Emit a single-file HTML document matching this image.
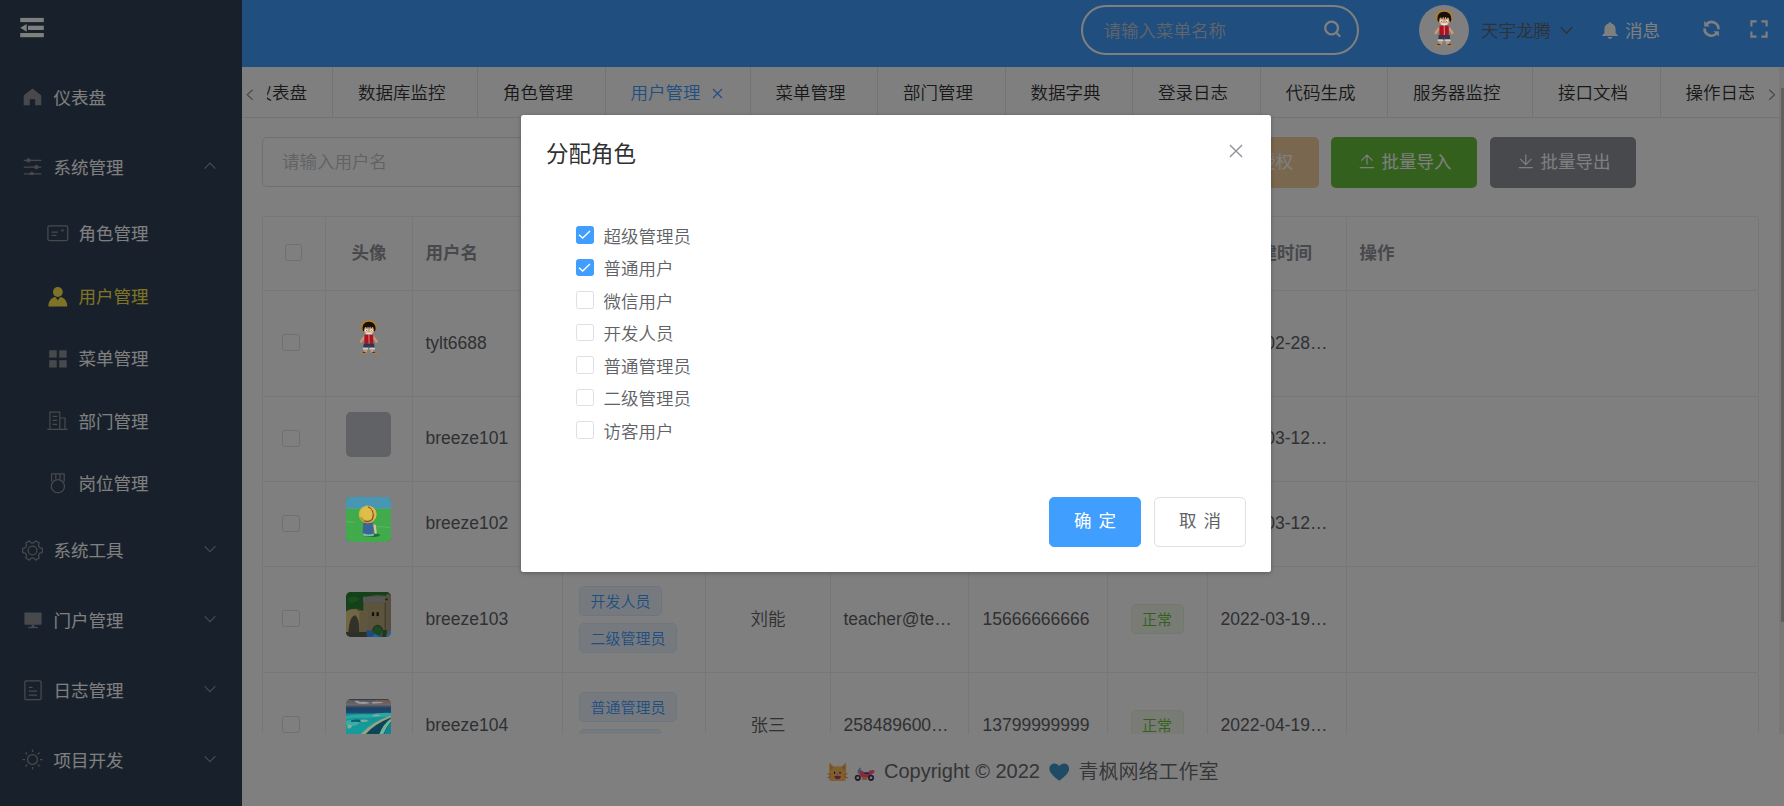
<!DOCTYPE html>
<html lang="zh-CN">
<head>
<meta charset="utf-8">
<title>用户管理</title>
<style>
*{box-sizing:border-box;margin:0;padding:0}
html,body{width:1784px;height:806px;overflow:hidden;background:#fff}
body{position:relative;font-family:"Liberation Sans","Noto Sans CJK SC",sans-serif;font-size:17.5px;font-weight:350;color:#606266}
svg{display:block}
/* ---------- sidebar ---------- */
#sidebar{position:absolute;left:0;top:0;width:242px;height:806px;background:#304156;color:#fff;font-weight:400}
#sidebar .mi{position:absolute;left:0;width:242px;height:70px;line-height:70px;white-space:nowrap}
#sidebar .mi.sub{height:62.5px;line-height:62.5px}
#sidebar .mi svg{position:absolute}
#sidebar .mi span{position:absolute;left:53.5px;top:1px}
#sidebar .mi.sub span{left:78.5px}
#sidebar .mi.act{color:#ffe74c}
/* ---------- header ---------- */
#header{position:absolute;left:242px;top:0;width:1542px;height:67px;background:#409eff}
#hsearch{position:absolute;left:839px;top:5px;width:278px;height:50px;border:2px solid #fff;border-radius:25px;color:#c3cad4;line-height:48px;padding-left:20.5px}
#havatar{position:absolute;left:1177px;top:5px;width:50px;height:50px;border-radius:50%;background:#fff;overflow:hidden}
#hname{position:absolute;left:1239px;top:0;line-height:62px;color:#606266}
#hmsg{position:absolute;left:1383px;top:0;line-height:62px;color:#fff;font-weight:400}
/* ---------- tabs ---------- */
#tabs{position:absolute;left:242px;top:67px;width:1537px;height:50.5px;border-bottom:1px solid #e4e7ed;background:#fff}
#tabscroll{position:absolute;left:25px;top:0;width:1487px;height:50px;overflow:hidden}
#tabnav{position:absolute;left:-37.5px;top:0;height:50px;white-space:nowrap;display:flex}
.tab{height:50px;line-height:52px;padding:0 31.5px 0 25px;border-left:1px solid #e4e7ed;position:relative;color:#303133;font-size:17.5px;flex:none}
.tab:first-child{border-left:none;padding-right:25px}
.tab.act{color:#409eff;padding-right:49px}
.tab.act svg{position:absolute;left:106.5px;top:21px}
/* ---------- main ---------- */
#main{position:absolute;left:242px;top:117.5px;width:1537px;height:616px;overflow:hidden;background:#fff}
#uinput{position:absolute;left:20px;top:19.5px;width:300px;height:50px;border:1px solid #dcdfe6;border-radius:5px;line-height:48px;padding-left:19px;color:#c0c4cc}
.btn{position:absolute;font-weight:400;top:19.5px;width:146px;height:50.5px;border-radius:5px;color:#fff;line-height:50px;white-space:nowrap}
.btn svg{position:absolute;top:17px}
.btn span{position:absolute}
/* table */
#tbl{position:absolute;left:20px;top:98.5px;width:1496px;border-top:1px solid #ebeef5;border-left:1px solid #ebeef5}
.tr{display:flex;border-bottom:1px solid #ebeef5}
.tr>div{flex:none;border-right:1px solid #ebeef5;position:relative;white-space:nowrap;overflow:hidden}
.th{height:74px;line-height:73px;font-weight:bold;color:#909399}
.c0{width:63px}.c1{width:87px}.c2{width:150px}.c3{width:143px}.c4{width:125px}.c5{width:138px}.c6{width:139px}.c7{width:100px}.c8{width:139px}.c9{width:412px}
.ctr{text-align:center}
.r .c6{padding-right:4px}
.pl{padding-left:12.5px}
.cb{position:absolute;width:17.5px;height:17px;border:1px solid #dcdfe6;border-radius:2.5px;background:#fff}
.av{position:absolute;left:19.5px;width:45px;height:45px;border-radius:5px;overflow:hidden;background:#c0c4cc}
.tag{display:block;height:30px;line-height:30px;padding:0 10.5px;font-size:15px;color:#409eff;background:#ecf5ff;border:1.25px solid #d9ecff;border-radius:5px;position:absolute;left:16px}
.tag.ok{color:#67c23a;background:#f0f9eb;border-color:#e1f3d8}
/* ---------- footer ---------- */
#footer{position:absolute;left:242px;top:733.5px;width:1542px;height:72.5px;background:#fff;font-size:20px;color:#686a6e}
/* ---------- overlay + dialog ---------- */
#mask{position:absolute;left:0;top:0;width:1784px;height:806px;background:rgba(0,0,0,.5)}
#dlg{position:absolute;left:521px;top:114.5px;width:750px;height:457.5px;background:#fff;border-radius:2.5px;box-shadow:0 1px 4px rgba(0,0,0,.3)}
#dlg h3{position:absolute;left:25px;top:25px;font-size:22.5px;line-height:30px;font-weight:normal;color:#303133}
#dlg .x{position:absolute;left:707px;top:28px}
.ck{position:absolute;left:55px;height:32.5px;line-height:32.5px;white-space:nowrap;color:#606266}
.ck i{position:absolute;left:0;top:7px;width:18px;height:17.5px;border:1px solid #dcdfe6;border-radius:2.5px;background:#fff}
.ck i.on{background:#409eff;border-color:#409eff}
.ck span{position:absolute;left:27.5px;top:1.5px}
.dbtn{position:absolute;top:382.5px;width:92px;height:50px;border-radius:5px;line-height:46px;font-weight:400;text-align:center;word-spacing:2px}
</style>
</head>
<body>
<div id="sidebar">
  <svg style="position:absolute;left:20px;top:17px" width="25" height="22" viewBox="20 17 25 22" fill="#fff"><rect x="20.25" y="17.9" width="23.55" height="4.2"/><rect x="28" y="25.7" width="15.8" height="4.3"/><path d="M20.25 27.8 L26.7 24 L26.7 31.8 Z"/><rect x="20.25" y="33" width="23.55" height="4.2"/></svg>
  <div class="mi" style="top:62px">
    <svg style="left:23px;top:26px" width="19" height="18" viewBox="0 0 19 18" fill="#909399"><path d="M9.5 .6 L18.3 7.6 V17.2 H12.2 V11.3 H6.8 V17.2 H.7 V7.6 Z"/></svg>
    <span>仪表盘</span>
  </div>
  <div class="mi" style="top:132px">
    <svg style="left:23px;top:25px" width="19" height="18" viewBox="0 0 19 18" fill="none" stroke="#909399" stroke-width="1.3"><path d="M.8 3.4 H18.3 M.8 10.2 H18.3 M.8 16.9 H18.3"/><circle cx="5.500" cy="3.400" r="2.100" fill="#909399" stroke="none"/><circle cx="13.400" cy="10.200" r="2.100" fill="#909399" stroke="none"/><circle cx="8.700" cy="16.900" r="2.100" fill="#909399" stroke="none"/></svg>
    <span>系统管理</span>
    <svg style="left:203.5px;top:30px" width="12" height="8" viewBox="0 0 12 8" fill="none" stroke="#909399" stroke-width="1.2"><path d="M.6 6.6 L6 1.2 L11.4 6.6"/></svg>
  </div>
  <div class="mi sub" style="top:202px">
    <svg style="left:46.5px;top:23px" width="22" height="17" viewBox="0 0 22 17" fill="none" stroke="#909399" stroke-width="1.25"><rect x=".9" y=".9" width="19.8" height="14.7" rx="1.5"/><path d="M4.6 7 H11 M4.6 10.3 H9.4"/><circle cx="15.4" cy="5.4" r="1.2" fill="#909399" stroke="none"/></svg>
    <span>角色管理</span>
  </div>
  <div class="mi sub act" style="top:264.5px">
    <svg style="left:47.5px;top:22px" width="20" height="20" viewBox="0 0 20 20" fill="#ffe74c"><circle cx="9.85" cy="5" r="4.9"/><path d="M.4 19.4 C.4 14.4 3.4 10.6 7.4 10.1 L9.85 13.2 L12.3 10.1 C16.3 10.6 19.3 14.4 19.3 19.4 Z"/></svg>
    <span>用户管理</span>
  </div>
  <div class="mi sub" style="top:327px">
    <svg style="left:48.5px;top:22.5px" width="18" height="18" viewBox="0 0 18 18" fill="#909399"><rect x=".2" y=".3" width="7.5" height="7.3"/><rect x="10.2" y=".3" width="7.5" height="7.3"/><rect x=".2" y="10.2" width="7.5" height="7.3"/><rect x="10.2" y="10.2" width="7.5" height="7.3"/></svg>
    <span>菜单管理</span>
  </div>
  <div class="mi sub" style="top:389.5px">
    <svg style="left:47px;top:21.5px" width="21" height="20" viewBox="0 0 21 20" fill="none" stroke="#909399" stroke-width="1.2"><path d="M.3 18.4 H20.7 M2.9 18.4 V1.1 H12.8 V18.4 M12.8 7 H18 V18.4 M5.6 5.4 H10.2 M5.6 9.4 H10.2 M5.6 13.4 H10.2"/></svg>
    <span>部门管理</span>
  </div>
  <div class="mi sub" style="top:452px">
    <svg style="left:49.5px;top:21px" width="16" height="21" viewBox="0 0 16 21" fill="none" stroke="#909399" stroke-width="1.25"><circle cx="7.9" cy="13.2" r="6.6"/><path d="M1.6 8.6 V.8 H14.2 V8.6 M5.8 .8 V6.4 M10 .8 V6.4"/></svg>
    <span>岗位管理</span>
  </div>
  <div class="mi" style="top:514.5px">
    <svg style="left:22px;top:25.300px" width="21" height="21" viewBox="0 0 21 21" fill="none" stroke="#909399" stroke-width="1.250"><circle cx="10.500" cy="10.500" r="4.400"/><path d="M17.74 7.87 L20.38 8.40 L20.38 12.60 L17.74 13.13 A7.7 7.7 0 0 1 16.40 15.45 L17.26 18.01 L13.62 20.11 L11.84 18.08 A7.7 7.7 0 0 1 9.16 18.08 L7.38 20.11 L3.74 18.01 L4.60 15.45 A7.7 7.7 0 0 1 3.26 13.13 L0.62 12.60 L0.62 8.40 L3.26 7.87 A7.7 7.7 0 0 1 4.60 5.55 L3.74 2.99 L7.38 0.89 L9.16 2.92 A7.7 7.7 0 0 1 11.84 2.92 L13.62 0.89 L17.26 2.99 L16.40 5.55 A7.7 7.7 0 0 1 17.74 7.87 Z" stroke-linejoin="round"/></svg>
    <span>系统工具</span>
    <svg style="left:203.5px;top:30px" width="12" height="8" viewBox="0 0 12 8" fill="none" stroke="#909399" stroke-width="1.2"><path d="M.6 1.2 L6 6.6 L11.4 1.2"/></svg>
  </div>
  <div class="mi" style="top:584.5px">
    <svg style="left:23.5px;top:27.5px" width="18" height="17" viewBox="0 0 18 17" fill="#909399"><rect x=".4" y=".5" width="17.2" height="12.3" rx=".8"/><rect x="7.6" y="12.8" width="2.8" height="2.2"/><rect x="4.2" y="14.8" width="9.6" height="1.4"/></svg>
    <span>门户管理</span>
    <svg style="left:203.5px;top:30px" width="12" height="8" viewBox="0 0 12 8" fill="none" stroke="#909399" stroke-width="1.2"><path d="M.6 1.2 L6 6.6 L11.4 1.2"/></svg>
  </div>
  <div class="mi" style="top:654.5px">
    <svg style="left:23.5px;top:25.5px" width="18" height="21" viewBox="0 0 18 21" fill="none" stroke="#909399" stroke-width="1.25"><rect x=".9" y=".9" width="16.2" height="18.8" rx="1.2"/><path d="M4.8 7.4 H8.6 M4.8 11.2 H13 M4.8 15 H13"/></svg>
    <span>日志管理</span>
    <svg style="left:203.5px;top:30px" width="12" height="8" viewBox="0 0 12 8" fill="none" stroke="#909399" stroke-width="1.2"><path d="M.6 1.2 L6 6.6 L11.4 1.2"/></svg>
  </div>
  <div class="mi" style="top:724.5px">
    <svg style="left:22px;top:24.5px" width="21" height="21" viewBox="0 0 21 21" fill="none" stroke="#909399" stroke-width="1.25"><circle cx="10.5" cy="10.5" r="4.9"/><path d="M10.5 .6 V3 M10.5 18 V20.4 M.6 10.5 H3 M18 10.5 H20.4 M3.5 3.5 L5.2 5.2 M15.8 15.8 L17.5 17.5 M3.5 17.5 L5.2 15.8 M15.8 5.2 L17.5 3.5"/></svg>
    <span>项目开发</span>
    <svg style="left:203.5px;top:30px" width="12" height="8" viewBox="0 0 12 8" fill="none" stroke="#909399" stroke-width="1.2"><path d="M.6 1.2 L6 6.6 L11.4 1.2"/></svg>
  </div>
</div>
<div id="header">
  <div id="hsearch">请输入菜单名称</div>
  <svg style="position:absolute;left:1081px;top:20px" width="19" height="18" viewBox="0 0 19 18" fill="none" stroke="#fff" stroke-width="2.3" stroke-linecap="round"><circle cx="8.6" cy="8" r="6.4"/><path d="M13.4 12.8 L16.6 16"/></svg>
  <div id="havatar"></div>
  <div id="hname">天宇龙腾</div>
  <svg style="position:absolute;left:1318px;top:26px" width="13" height="9" viewBox="0 0 13 9" fill="none" stroke="#606266" stroke-width="1.3"><path d="M.7 1.3 L6.5 7.2 L12.3 1.3"/></svg>
  <svg style="position:absolute;left:1360px;top:21.5px" width="16" height="17" viewBox="0 0 16 17" fill="#fff"><path d="M8 .2 C8.8 .2 9.4 .8 9.4 1.6 C12 2.3 13.6 4.6 13.6 7.4 V11 L15.8 13.2 V14 H.2 V13.2 L2.4 11 V7.4 C2.4 4.6 4 2.3 6.6 1.6 C6.6 .8 7.2 .2 8 .2 Z M5.8 15 H10.2 C10.2 16.1 9.2 16.9 8 16.9 C6.800 16.9 5.8 16.1 5.8 15 Z"/></svg>
  <div id="hmsg">消息</div>
  <svg style="position:absolute;left:1460px;top:19.5px" width="19" height="18" viewBox="0 0 19 18" fill="none" stroke="#fff" stroke-width="2.600"><path d="M4.200 4.600 A6.900 6.900 0 0 1 16.500 9.200"/><path d="M14.900 13 A6.900 6.900 0 0 1 2.600 8.400"/><path d="M2.200 1 V6.400 H7.800 Z" fill="#fff" stroke="none"/><path d="M16.900 16.600 V11.200 H11.300 Z" fill="#fff" stroke="none"/></svg>
  <svg style="position:absolute;left:1508px;top:20px" width="18" height="18" viewBox="0 0 18 18" fill="none" stroke="#fff" stroke-width="2.1"><path d="M1.4 6.6 V1.400 H6.6 M11.4 1.4 H16.6 V6.6 M16.6 11.400 V16.6 H11.4 M6.6 16.6 H1.4 V11.4"/></svg>
</div>
<div id="tabs">
  <svg style="position:absolute;left:3.500px;top:21.500px" width="8" height="12" viewBox="0 0 8 12" fill="none" stroke="#909399" stroke-width="1.200"><path d="M6.600 .8 L1.200 5.800 L6.600 10.800"/></svg>
  <div id="tabscroll"><div id="tabnav">
    <div class="tab">仪表盘</div><div class="tab">数据库监控</div><div class="tab">角色管理</div><div class="tab act">用户管理<svg width="11" height="11" viewBox="0 0 11 11" fill="none" stroke="#409eff" stroke-width="1.2"><path d="M1 1 L10 10 M10 1 L1 10"/></svg></div><div class="tab">菜单管理</div><div class="tab">部门管理</div><div class="tab">数据字典</div><div class="tab">登录日志</div><div class="tab">代码生成</div><div class="tab">服务器监控</div><div class="tab">接口文档</div><div class="tab">操作日志</div><div class="tab">定时任务</div>
  </div></div>
  <svg style="position:absolute;left:1526px;top:21.500px" width="8" height="12" viewBox="0 0 8 12" fill="none" stroke="#909399" stroke-width="1.200"><path d="M1.200 .8 L6.600 5.800 L1.200 10.800"/></svg>
</div>
<svg width="0" height="0" style="position:absolute">
  <defs>
    <symbol id="luffy" viewBox="0 0 20 37">
      <ellipse cx="10.100" cy="7.300" rx="8.600" ry="7.300" fill="#b47c2e"/>
      <path d="M3.300 9.500 Q3 2 10 1.800 Q17.400 2 17.300 9.500 L16.400 12.400 L15 10.500 L14.700 8 L5.600 8 L5.300 10.500 L4 12.400 Z" fill="#15100c"/>
      <path d="M5.400 9 Q5.200 7 10.200 6.800 Q15.200 7 15 9 L15.200 12.400 Q14.600 15.400 10.200 15.600 Q5.800 15.400 5.200 12.400 Z" fill="#cfa27a"/>
      <path d="M5.200 9.400 L6.600 6.400 L8 9.200 L9.200 6.200 L10.200 9.600 L11.400 6.200 L12.600 9.200 L14 6.400 L15.200 9.400 L15.200 6 L5.200 6 Z" fill="#15100c"/>
      <circle cx="7.300" cy="11.100" r="1.400" fill="#ececec"/><circle cx="12.900" cy="11.100" r="1.400" fill="#ececec"/>
      <circle cx="7.500" cy="11.200" r=".5" fill="#111"/><circle cx="12.700" cy="11.200" r=".5" fill="#111"/>
      <path d="M6.600 13.300 H13.800 Q13.400 15.400 10.200 15.500 Q7 15.400 6.600 13.300 Z" fill="#e4e4e4"/>
      <path d="M5.400 16.300 L2.600 19.400 L.3 22.600 L.9 24.300 L2.800 24 L4.200 21.400 L5.800 19.600 Z M14.600 16.300 L17.400 19.400 L19.700 22.600 L19.100 24.300 L17.200 24 L15.800 21.400 L14.200 19.600 Z" fill="#c99a72"/>
      <rect x="9" y="15.400" width="2.400" height="10.400" fill="#c99a72"/>
      <path d="M5.300 16.200 Q7.400 15.400 9.600 15.800 L9.800 25.400 H5.400 Z M14.700 16.200 Q12.600 15.400 10.600 15.800 L10.800 25.400 H14.700 Z" fill="#b00f24"/>
      <path d="M4.600 25 H15.600 L16.200 30 H10.800 L10.100 27.600 L9.400 30 H4 Z" fill="#33334c"/>
      <rect x="3.600" y="29.400" width="5.800" height="2.200" rx=".8" fill="#c6ccc6"/><rect x="10.700" y="29.400" width="5.900" height="2.200" rx=".8" fill="#c6ccc6"/>
      <rect x="5" y="31.400" width="3" height="3.600" fill="#c99a72"/><rect x="12" y="31.400" width="3" height="3.600" fill="#c99a72"/>
      <ellipse cx="3.500" cy="35.700" rx="3.700" ry="1.200" fill="#a67e4c"/><ellipse cx="16.600" cy="35.700" rx="3.700" ry="1.200" fill="#a67e4c"/>
      <path d="M2.400 35.200 L5 33.800 L7.600 35 Z M17.700 35.200 L15.100 33.800 L12.500 35 Z" fill="#2b2b46"/>
    </symbol>
  </defs>
</svg>
<div id="main">
  <div id="uinput">请输入用户名</div>
  <div class="btn" style="left:931px;background:#f3d19e"><span style="left:50px">批量授权</span></div>
  <div class="btn" style="left:1089px;background:#67c23a"><svg style="left:27.5px" width="16" height="16" viewBox="0 0 16 16" fill="none" stroke="#fff" stroke-width="1.2"><path d="M8 10.500 V1 M2.400 6.600 L8 1 L13.600 6.600 M.8 13.600 H15.200"/></svg><span style="left:50.5px">批量导入</span></div>
  <div class="btn" style="left:1248px;background:#909399"><svg style="left:27.5px" width="16" height="16" viewBox="0 0 16 16" fill="none" stroke="#fff" stroke-width="1.2"><path d="M7.800 .4 V10.600 M2.200 4.800 L7.800 10.600 L13.400 4.800 M.8 13.600 H14.800"/></svg><span style="left:50.5px">批量导出</span></div>
  <div id="tbl">
    <div class="tr th"><div class="c0"><i class="cb" style="left:22px;top:27px;width:17px;height:17px"></i></div><div class="c1 ctr">头像</div><div class="c2 pl">用户名</div><div class="c3 ctr">角色</div><div class="c4 ctr">姓名</div><div class="c5 ctr">邮箱</div><div class="c6 ctr">手机号</div><div class="c7 ctr">状态</div><div class="c8 ctr">创建时间</div><div class="c9 pl">操作</div></div>
    <div class="tr r" style="height:106px;line-height:104px"><div class="c0"><i class="cb" style="left:19px;top:43px"></i></div><div class="c1"></div><div class="c2 pl">tylt6688</div><div class="c3"><span class="tag" style="top:19px">超级管理员</span><span class="tag" style="top:56px">普通用户</span></div><div class="c4 ctr">天宇龙腾</div><div class="c5 pl">tylt6688@…</div><div class="c6 ctr">13888888888</div><div class="c7"><span class="tag ok" style="left:22.5px;top:37px">正常</span></div><div class="c8 pl">2022-02-28…</div><div class="c9"></div></div>
    <div class="tr r" style="height:85px;line-height:83px"><div class="c0"><i class="cb" style="left:19px;top:33px"></i></div><div class="c1"><div class="av" style="top:15px"></div></div><div class="c2 pl">breeze101</div><div class="c3"><span class="tag" style="top:27px">普通用户</span></div><div class="c4 ctr">张三</div><div class="c5 pl">breeze@te…</div><div class="c6 ctr">13666666666</div><div class="c7"><span class="tag ok" style="left:22.5px;top:26.5px">正常</span></div><div class="c8 pl">2022-03-12…</div><div class="c9"></div></div>
    <div class="tr r" style="height:85px;line-height:83px"><div class="c0"><i class="cb" style="left:19px;top:33px"></i></div><div class="c1"><div class="av" style="top:15px"></div></div><div class="c2 pl">breeze102</div><div class="c3"><span class="tag" style="top:27px">微信用户</span></div><div class="c4 ctr">李四</div><div class="c5 pl">breeze@te…</div><div class="c6 ctr">13777777777</div><div class="c7"><span class="tag ok" style="left:22.5px;top:26.5px">正常</span></div><div class="c8 pl">2022-03-12…</div><div class="c9"></div></div>
    <div class="tr r" style="height:106px;line-height:104px"><div class="c0"><i class="cb" style="left:19px;top:43px"></i></div><div class="c1"><div class="av" style="top:25px"></div></div><div class="c2 pl">breeze103</div><div class="c3"><span class="tag" style="top:19px">开发人员</span><span class="tag" style="top:56px">二级管理员</span></div><div class="c4 ctr">刘能</div><div class="c5 pl">teacher@te…</div><div class="c6 ctr">15666666666</div><div class="c7"><span class="tag ok" style="left:22.5px;top:37px">正常</span></div><div class="c8 pl">2022-03-19…</div><div class="c9"></div></div>
    <div class="tr r" style="height:106px;line-height:104px"><div class="c0"><i class="cb" style="left:19px;top:43px"></i></div><div class="c1"><div class="av" style="top:26px"></div></div><div class="c2 pl">breeze104</div><div class="c3"><span class="tag" style="top:19px">普通管理员</span><span class="tag" style="top:56px">开发人员</span></div><div class="c4 ctr">张三</div><div class="c5 pl">258489600…</div><div class="c6 ctr">13799999999</div><div class="c7"><span class="tag ok" style="left:22.5px;top:37px">正常</span></div><div class="c8 pl">2022-04-19…</div><div class="c9"></div></div>
  </div>
</div>
<div id="footer">
  <svg style="position:absolute;left:584.500px;top:28.500px" width="21.300" height="20" viewBox="0 0 22 20" preserveAspectRatio="none"><path d="M2.200 1.200 Q2.300 .4 3 .9 L7 4.600 Q11 3.800 15 4.600 L19 .9 Q19.700 .4 19.800 1.200 L19.800 16.500 Q19.800 19 17.400 19 H4.600 Q2.200 19 2.200 16.500 Z" fill="#ffbe5a"/><path d="M3.400 2.800 L6.600 5.800 L3.600 8.600 Z M18.600 2.800 L15.400 5.800 L18.400 8.600 Z" fill="#f59a4a"/><ellipse cx="7.800" cy="10.800" rx=".7" ry="1.200" fill="#3a2a20"/><path d="M12.500 10.800 H14.600" stroke="#3a2a20" stroke-width="1.100"/><path d="M10 11.800 H11.700 L10.850 12.900 Z" fill="#f0508c"/><path d="M7.400 14.200 Q11 13.200 14.600 14.200 Q13.600 17.200 11 17.200 Q8.400 17.200 7.400 14.200 Z" fill="#b43490"/><path d="M.6 11.600 L4.200 12.800 M.4 15.800 L4.200 14.600 M21.400 11.600 L17.800 12.800 M21.600 15.800 L17.800 14.600" stroke="#f07a3c" stroke-width=".9"/></svg>
  <svg style="position:absolute;left:612px;top:33px" width="22" height="15" viewBox="0 0 22 15"><path d="M3.400 4.200 L5.800 .6 L7 1 L6 5 Z" fill="#3cc4f0"/><path d="M3.400 5.600 Q5 3 8 3.600 L10.400 5.400 L14.200 5.400 L15.600 3.400 L20.200 3 L20.400 5.400 L17.400 7.400 L15 10.400 H8 L5.600 7.600 Z" fill="#ff5a8c"/><path d="M10 5.600 H15 L14.400 6.800 H10.600 Z" fill="#3a2a60"/><path d="M7.800 10 H13.400 L12.600 13 H8.600 Z" fill="#ffa040"/><circle cx="5.400" cy="5.800" r=".7" fill="#ffd84a"/><circle cx="3.800" cy="10.800" r="3.100" fill="#4a3860"/><circle cx="17" cy="10.800" r="3.100" fill="#4a3860"/><circle cx="3.800" cy="10.800" r="1.300" fill="#fff"/><circle cx="17" cy="10.800" r="1.300" fill="#fff"/></svg>
  <div style="position:absolute;left:642px;top:22px;line-height:30px;white-space:nowrap">Copyright © 2022</div>
  <svg style="position:absolute;left:806.500px;top:29.300px" width="20.500" height="18.200" viewBox="0 0 21 19" preserveAspectRatio="none"><path d="M10.500 18.600 C4 13.600 .4 10 .4 5.800 C.4 2.600 2.800 .4 5.600 .4 C7.600 .4 9.400 1.400 10.500 3.200 C11.600 1.400 13.400 .4 15.400 .4 C18.200 .4 20.600 2.600 20.600 5.800 C20.600 10 17 13.600 10.500 18.600 Z" fill="#4096cc"/></svg>
  <div style="position:absolute;left:836.500px;top:23px;line-height:30px;white-space:nowrap">青枫网络工作室</div>
</div>
<div style="position:absolute;left:1779px;top:67px;width:5px;height:666.5px;background:#f1f1f1"></div>
<div style="position:absolute;left:1781px;top:88px;width:3px;height:534px;background:#c1c1c1"></div>
<div id="mask"></div>
<div id="imgs" style="position:absolute;left:0;top:0;width:1784px;height:733.5px;overflow:hidden">
  <svg style="position:absolute;left:1433.900px;top:10.300px" width="20.200" height="36.900" viewBox="0 0 20 37"><use href="#luffy"/></svg>
  <svg style="position:absolute;left:358.700px;top:320.400px" width="19.600" height="34.700" viewBox="0 0 20 37"><use href="#luffy"/></svg>
  <svg style="position:absolute;left:346px;top:497px;border-radius:5px" width="45" height="45" viewBox="0 0 45 45">
    <rect width="45" height="45" fill="#41aa4b"/><rect width="45" height="11.500" fill="#4696b4"/><rect y="10.800" width="45" height="1.200" fill="#4fa08e"/>
    <path d="M0 24.600 L9 25.400 M31 29.200 L44 30.600" stroke="#6cc07a" stroke-width=".6"/>
    <ellipse cx="25.500" cy="38.200" rx="8.500" ry="1.900" fill="#1f6e34"/>
    <path d="M17.200 26 H27.400 L27.800 37 Q22 38.600 16.600 36.800 Z" fill="#3c6496"/>
    <path d="M17.200 36.300 Q22 38.400 27.800 36.400 L28 38.400 Q22 40.200 17 38.400 Z" fill="#78bea0"/>
    <path d="M27.200 27 L29.800 28 L30.800 36.600 L28.800 36.800 Z" fill="#dcbea0"/>
    <circle cx="21.700" cy="17.300" r="8.900" fill="#d7b946"/>
    <path d="M13.600 21 Q17 27.600 24.500 25.800 Q19 25 16 19.800 Z" fill="#b89a36"/>
    <path d="M22 9.800 Q29.600 14.600 26.200 22.400 Q23.600 25.400 18.400 23.800" stroke="#96462a" stroke-width="1.300" fill="none"/>
    <ellipse cx="20.800" cy="16.600" rx="5.600" ry="6.200" fill="#dcbe4a"/>
  </svg>
  <svg style="position:absolute;left:346px;top:592px;border-radius:5px" width="45" height="45" viewBox="0 0 45 45">
    <rect width="45" height="45" fill="#554d3a"/>
    <path d="M0 0 H45 V5 L38 3.600 L30 3 L18 5 L17.500 19 L10 16.400 L0 19 Z" fill="#14401a"/>
    <path d="M2 6 Q8 2 14 7 Q9 12 3 11 Z" fill="#1a4c1e"/>
    <rect x="17.500" y="10.500" width="22" height="28" fill="#5d543e"/>
    <path d="M17 4.800 H39.500 V10.600 H17 Z" fill="#565654"/>
    <path d="M39.400 4 L42 1.600 L45 3.600 V42 H39.400 Z" fill="#575040"/>
    <circle cx="40.500" cy="7.400" r="1.100" fill="#1c1814"/>
    <rect x="38.600" y="10.600" width="1" height="27" fill="#3e382a"/>
    <rect x="25.900" y="20.200" width="2.300" height="3.900" fill="#14120e"/><rect x="30.500" y="20.200" width="2.300" height="3.900" fill="#14120e"/>
    <path d="M0 19.400 Q8 14.600 13 19.400 L20.400 19.600 V40 H0 Z" fill="#716843"/>
    <path d="M2.400 40 Q3.400 24 9.400 23.200 Q13.400 26 13.400 40 Z" fill="#33322a"/>
    <path d="M13.400 20 H20.400 V40 H13.400 Z" fill="#5f563e"/>
    <path d="M0 40 H21 L22 45 H0 Z" fill="#2c3026"/>
    <path d="M20 38.400 H33 L36 45 H21 Z" fill="#1e4a7c"/>
    <circle cx="31.700" cy="38.400" r="5" fill="#1c4a1e"/>
    <path d="M26.700 38.400 A5 5 0 0 1 36.700 38.400" fill="none" stroke="#2a281e" stroke-width="1"/>
    <path d="M26 45 L29 41.600 L34 45 Z" fill="#24609c"/>
    <path d="M36 45 L37 38 H41 L40 45 Z" fill="#1a3a1c"/>
    <path d="M40 45 L45 37.400 V45 Z" fill="#2664a6"/>
  </svg>
  <svg style="position:absolute;left:346px;top:699px;border-radius:5px" width="45" height="45" viewBox="0 0 45 45">
    <defs><linearGradient id="sea" x1="0" y1="0" x2="0" y2="1"><stop offset="0" stop-color="#1a3050"/><stop offset=".03" stop-color="#5a5558"/><stop offset=".13" stop-color="#6e6a6c"/><stop offset=".17" stop-color="#3c4c64"/><stop offset=".21" stop-color="#1c3f66"/><stop offset=".3" stop-color="#1b4a70"/><stop offset=".34" stop-color="#188c96"/><stop offset=".5" stop-color="#16989a"/><stop offset="1" stop-color="#12a09c"/></linearGradient></defs>
    <rect width="45" height="45" fill="url(#sea)"/>
    <path d="M8 2 Q12 1 14 3 Q20 2.400 24 4 Q19 5.400 12 4.600 Z M26 3 Q32 1.600 38 3.600 Q32 5 26 4.400 Z" fill="#9a9aa0"/>
    <path d="M30 1 Q38 .6 44 2.400 L44 4 Q36 2.600 30 2.600 Z M2 1.600 Q6 1 9 2.200 L3 3 Z" fill="#7a5e48"/>
    <path d="M0 17 Q12 14.600 24 15.600 Q34 13.400 45 14 V18 Q30 17.600 22 19 Q10 18 0 20 Z" fill="#2aa8a0"/>
    <path d="M0 22 Q6 19.600 12 21.400 Q16 24 10 26.400 Q4 27.600 0 26 Z" fill="#4ab4a4" opacity=".7"/>
    <path d="M5 21.400 Q10 19.800 16 21.200 Q17 23 12 23 Q8 22.400 5 23 Z" fill="#0e5a70"/>
    <path d="M1 27 Q4 24 6 27 Q5 30 2 29.400 Z M14 21 Q20 19.400 23 22 Q19 23.400 15 23 Z M27 16 Q31 14.600 35 16.400 Q31 17.600 27 17.400 Z" fill="#9ab496" opacity=".8"/>
    <path d="M19 36 Q29 22.600 45 17.600 V45 H19 Z" fill="#0c4656"/>
    <path d="M14 36 Q25 23 45 16.400 L45 18.400 Q28 25 18.800 36 Z" fill="#98a284"/>
    <path d="M33 36 Q37 25 45 19.600 V22.400 Q40 28 37 36 Z" fill="#6eb49c"/>
    <path d="M37.400 36 Q40.400 28 45 23 V36 Z" fill="#14848e"/>
  </svg>
</div>
<div id="dlg">
  <h3>分配角色</h3>
  <svg class="x" width="16" height="16" viewBox="0 0 16 16" fill="none" stroke="#909399" stroke-width="1.400"><path d="M1.900 1.900 L14.100 14.100 M14.100 1.900 L1.900 14.100"/></svg>
  <div class="ck" style="top:104.500px"><i class="on"><svg width="16" height="16" viewBox="0 0 16 16" fill="none" stroke="#fff" stroke-width="1.400"><path d="M2 7.700 L5.700 11 L13 4"/></svg></i><span>超级管理员</span></div>
  <div class="ck" style="top:137px"><i class="on"><svg width="16" height="16" viewBox="0 0 16 16" fill="none" stroke="#fff" stroke-width="1.400"><path d="M2 7.700 L5.700 11 L13 4"/></svg></i><span>普通用户</span></div>
  <div class="ck" style="top:169.500px"><i></i><span>微信用户</span></div>
  <div class="ck" style="top:202px"><i></i><span>开发人员</span></div>
  <div class="ck" style="top:234.500px"><i></i><span>普通管理员</span></div>
  <div class="ck" style="top:267px"><i></i><span>二级管理员</span></div>
  <div class="ck" style="top:299.500px"><i></i><span>访客用户</span></div>
  <div class="dbtn" style="left:528px;background:#409eff;border:1px solid #409eff;color:#fff">确 定</div>
  <div class="dbtn" style="left:633px;background:#fff;border:1px solid #dcdfe6;color:#606266">取 消</div>
</div>
</body>
</html>
